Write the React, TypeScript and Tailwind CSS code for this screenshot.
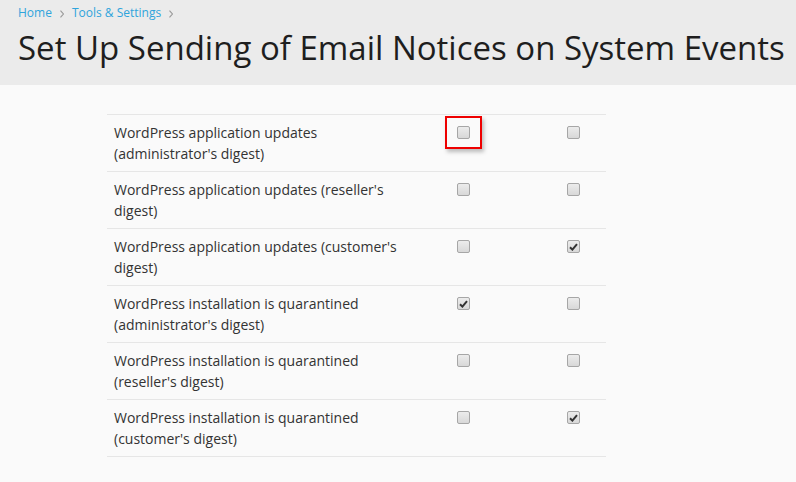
import React from "react";

type Row = { label: string; a: boolean; b: boolean };

const rows: Row[] = [
  { label: "WordPress application updates (administrator's digest)", a: false, b: false },
  { label: "WordPress application updates (reseller's digest)", a: false, b: false },
  { label: "WordPress application updates (customer's digest)", a: false, b: true },
  { label: "WordPress installation is quarantined (administrator's digest)", a: true, b: false },
  { label: "WordPress installation is quarantined (reseller's digest)", a: false, b: false },
  { label: "WordPress installation is quarantined (customer's digest)", a: false, b: true },
];

function Box({ checked }: { checked: boolean }) {
  return (
    <span className="flex h-[13px] w-[13px] items-center justify-center rounded-[2px] border border-[#a6a6a6] bg-gradient-to-b from-[#ececec] to-[#d8d8d8]">
      {checked && (
        <svg width="9" height="8" viewBox="0 0 9 8">
          <path d="M1 4.2 L3.4 6.6 L8 1.2" fill="none" stroke="#333" strokeWidth="2" />
        </svg>
      )}
    </span>
  );
}

function Chevron() {
  return (
    <svg width="4" height="8" viewBox="0 0 4 8" className="mt-[1px]">
      <path d="M0.5 0.7 L3.4 4 L0.5 7.3" fill="none" stroke="#9a9a9a" strokeWidth="1.1" />
    </svg>
  );
}

export default function App() {
  return (
    <div className="min-h-[482px] bg-[#fafafa] font-['Open_Sans',sans-serif] text-[#333]">
      <div className="h-[85px] bg-[#ebebeb] px-[18px] pt-[4px]">
        <div className="flex items-center gap-[8px] text-[12px] leading-[18px] text-[#2fa4dc]">
          <span>Home</span>
          <Chevron />
          <span>Tools &amp; Settings</span>
          <Chevron />
        </div>
        <h1 className="mt-[6px] whitespace-nowrap text-[33px] leading-[40px] text-[#1e1e1e]">
          Set Up Sending of Email Notices on System Events
        </h1>
      </div>
      <div className="ml-[107px] mt-[29px] w-[499px] border-t border-[#e6e6e6]">
        {rows.map((r, i) => (
          <div key={r.label} className="flex h-[57px] border-b border-[#e6e6e6]">
            <div className="w-[300px] shrink-0 pl-[7px] pt-[7px] text-[14px] leading-[21px] text-[#333]">
              {r.label}
            </div>
            <div className="relative flex w-[112px] shrink-0 justify-center pt-[11px]">
              {i === 0 && (
                <span className="absolute left-[38px] top-[1px] h-[33px] w-[37px] border-2 border-[#e00] shadow-[2px_3px_4px_rgba(0,0,0,0.25)]" />
              )}
              <Box checked={r.a} />
            </div>
            <div className="flex flex-1 pl-[48px] pt-[11px]">
              <Box checked={r.b} />
            </div>
          </div>
        ))}
      </div>
    </div>
  );
}
